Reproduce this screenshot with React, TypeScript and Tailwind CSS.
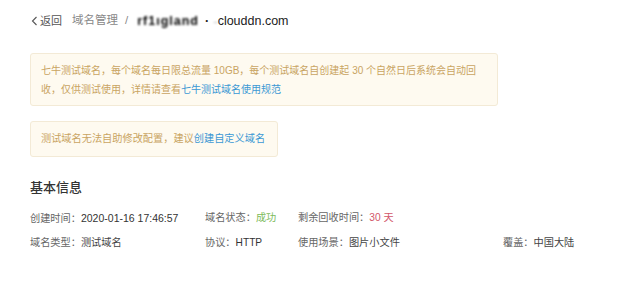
import React from "react";

const font = {
  fontFamily:
    '"Liberation Sans", "Noto Sans CJK SC", "Noto Sans", sans-serif',
};

export default function App() {
  return (
    <div
      className="w-[640px] h-[281px] bg-white overflow-hidden"
      style={font}
    >
      <div className="flex items-center pl-[30px] pt-[13px] h-[16px] box-content whitespace-nowrap">
        <span className="flex items-center text-[11px] text-[#555]">
          <svg width="9" height="10" viewBox="0 0 9 10" className="mr-[1px]">
            <path d="M6.5 1 L2.5 5 L6.5 9" fill="none" stroke="#555" strokeWidth="1.1" />
          </svg>
          返回
        </span>
        <span className="ml-[10px] text-[11.5px] text-[#888]">域名管理</span>
        <span className="ml-[7px] text-[11.5px] text-[#888]">/</span>
        <span className="ml-[9px] flex items-center text-[12.5px] text-[#222]">
          <span className="blur-[1px] font-bold tracking-[1px] text-[#000]">
            rf1ıgland
          </span>
          <span className="ml-[6px] mr-[4px] font-bold">·</span>
          <span className="blur-[1px] text-[8px] text-[#333]">..</span>
          <span>clouddn.com</span>
        </span>
      </div>

      <div className="ml-[30px] mt-[24px] w-[468px] h-[53px] border border-[#f3ead6] bg-[#fefaf0] rounded-[3px] px-[10px] pt-[7px] text-[10px] leading-[19px] text-[#c9a462] whitespace-nowrap">
        <div>
          七牛测试域名，每个域名每日限总流量 10GB，每个测试域名自创建起 30 个自然日后系统会自动回
        </div>
        <div>
          收，仅供测试使用，详情请查看
          <span className="text-[#3b98d4]">七牛测试域名使用规范</span>
        </div>
      </div>

      <div className="ml-[30px] mt-[15px] w-[248px] h-[36px] border border-[#f3ead6] bg-[#fefaf0] rounded-[3px] px-[10px] flex items-center text-[10.2px] text-[#c9a462] whitespace-nowrap">
        <span>
          测试域名无法自助修改配置，建议
          <span className="text-[#3b98d4]">创建自定义域名</span>
        </span>
      </div>

      <div className="ml-[30px] mt-[22px] text-[13px] leading-[18px] text-[#333] font-medium">
        基本信息
      </div>

      <div className="ml-[30px] mt-[12px] grid grid-cols-[175px_93px_205px_auto] gap-y-[6px] text-[10.2px] leading-[18px] text-[#666] whitespace-nowrap">
        <div>
          创建时间：<span className="text-[#333] text-[10.5px]">2020-01-16 17:46:57</span>
        </div>
        <div>
          域名状态：<span className="text-[#7dbb5b]">成功</span>
        </div>
        <div>
          剩余回收时间：<span className="text-[#d2566a]">30 天</span>
        </div>
        <div />
        <div>
          域名类型：<span className="text-[#444]">测试域名</span>
        </div>
        <div>
          协议：<span className="text-[#333]">HTTP</span>
        </div>
        <div>
          使用场景：<span className="text-[#444]">图片小文件</span>
        </div>
        <div>
          覆盖：<span className="text-[#444]">中国大陆</span>
        </div>
      </div>
    </div>
  );
}
